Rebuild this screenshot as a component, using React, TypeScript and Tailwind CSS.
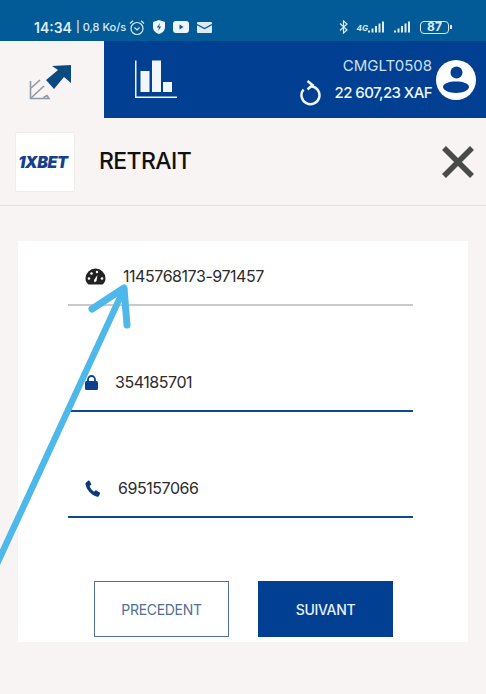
import React from "react";

const AlarmIcon = () => (
  <svg width="16" height="17" viewBox="0 0 16 17" fill="none" stroke="#dcebf5" strokeWidth="1.2">
    <circle cx="8" cy="9.5" r="6" />
    <path d="M5.5 8.5 8 11l2.5-2.5" />
    <path d="M1 4.500 4 1.800M15 4.500 12 1.800" />
  </svg>
);

const ShieldIcon = () => (
  <svg width="12" height="14" viewBox="0 0 12 14">
    <path d="M6 0 12 2v5c0 3.500-2.500 6-6 7-3.500-1-6-3.500-6-7V2z" fill="#eef5fa" />
    <path d="M7 3 3.800 7.500H6L5 11l3.200-4.500H6z" fill="#025a96" />
  </svg>
);

const YoutubeIcon = () => (
  <svg width="16" height="12" viewBox="0 0 16 12">
    <rect width="16" height="12" rx="3" fill="#eef5fa" />
    <path d="M6.500 3.500v5L10.500 6z" fill="#025a96" />
  </svg>
);

const MailIcon = () => (
  <svg width="15" height="11" viewBox="0 0 15 11">
    <rect width="15" height="11" rx="1" fill="#dcebf5" />
    <path d="M0 2.500 7.500 6.500 15 2.500" fill="none" stroke="#025a96" strokeWidth="1.300" />
  </svg>
);

const BluetoothIcon = () => (
  <svg width="9" height="14" viewBox="0 0 9 14" fill="none" stroke="#dcebf5" strokeWidth="1.200">
    <path d="M1 3.500 8 10 4.500 13V1L8 4 1 10.500" />
  </svg>
);

const SignalIcon = () => (
  <svg width="17" height="12" viewBox="0 0 17 12" fill="#dcebf5">
    <rect x="0" y="9.500" width="2" height="2" />
    <rect x="3.500" y="7.500" width="2" height="4" />
    <rect x="7" y="5" width="2" height="6.500" />
    <rect x="10.500" y="2.500" width="2" height="9" />
    <rect x="14" y="0.500" width="2" height="11" />
  </svg>
);

const SwapIcon = () => (
  <svg width="48" height="38" viewBox="0 0 48 38" fill="none">
    <path d="M14 17 5 25" stroke="#8f9aa6" strokeWidth="1.600" />
    <path d="M4.500 18v17.500H23l-2-3-3.500 2" stroke="#8f9aa6" strokeWidth="1.600" />
    <path d="M5 35 18 23" stroke="#8f9aa6" strokeWidth="1.600" />
    <path d="M26 3 45 2V20L38 14 28 26 20 17 32 7z" fill="#0b4a7e" />
  </svg>
);

const ChartIcon = () => (
  <svg width="44" height="40" viewBox="0 0 44 40" fill="#f1f6fa">
    <rect x="0" y="0.500" width="1.500" height="37" />
    <rect x="0" y="36.500" width="42" height="1.500" />
    <rect x="5.500" y="11" width="9" height="21" />
    <rect x="17" y="0.500" width="9" height="31.500" />
    <rect x="28" y="22" width="9" height="10" />
  </svg>
);

const RefreshIcon = () => (
  <svg width="24" height="26" viewBox="0 0 24 26" fill="none" stroke="#f1f6fa" strokeWidth="2.500">
    <path d="M12 6.200A9 9 0 1 1 4.500 9.500" />
    <path d="M8.500 1 13.500 5 8.500 9.500" />
  </svg>
);

const UserBadge = () => (
  <svg width="40" height="40" viewBox="0 0 40 40">
    <circle cx="20" cy="20" r="20" fill="#fff" />
    <circle cx="20.500" cy="12.500" r="6" fill="#003f92" />
    <path d="M20 21.500c-7 0-13 2-13 5.500 0 3 6 6 13 6s13-3 13-6c0-3.500-6-5.500-13-5.500z" fill="#003f92" />
  </svg>
);

const GaugeIcon = () => (
  <svg width="21" height="17" viewBox="0 0 21 17">
    <path d="M3.500 16.500C1.500 15 .5 12.800.5 10.500a10 10 0 0 1 20 0c0 2.300-1 4.500-3 6z" fill="#222" />
    <g fill="#fff">
      <circle cx="4" cy="10.500" r="1.300" />
      <circle cx="6.500" cy="5.500" r="1.300" />
      <circle cx="12" cy="4" r="1.200" />
      <circle cx="17" cy="10.500" r="1.300" />
      <path d="M9.500 14.500 9 12l3.500-5-1 6z" />
    </g>
  </svg>
);

const LockIcon = () => (
  <svg width="13" height="15" viewBox="0 0 13 15">
    <path d="M3 7V4.500a3.500 3.500 0 0 1 7 0V7" fill="none" stroke="#0b3f8f" strokeWidth="1.800" />
    <rect x="0" y="6" width="13" height="9" rx="1.500" fill="#0b3f8f" />
  </svg>
);

const PhoneIcon = () => (
  <svg width="16" height="17" viewBox="0 0 16 17">
    <path
      d="M1 2.500 3.500.5c.5-.3 1 0 1.200.4l1.500 3c.2.500.1.900-.3 1.200L4.600 6c.7 2.300 2.400 4.400 4.500 5.700l1.200-1.100c.4-.3.800-.4 1.200-.1l3.200 1.900c.4.300.5.800.3 1.200L14 16c-.4.600-1 .9-1.800.7C6.500 15.500 1.200 9.500.5 4c-.1-.6.100-1.100.5-1.500z"
      fill="#0b3a75"
    />
  </svg>
);

function Field({ icon, value, gap, line }: { icon: React.ReactNode; value: string; gap: string; line: string }) {
  return (
    <div className={`ml-[50px] w-[345px] h-[40px] border-b-2 ${line} flex items-start`}>
      <div className={`flex items-center ${gap} pl-[17px] text-[16px] leading-[20px] tracking-[-0.45px] text-[#2b2b2b]`}>
        <span className="flex w-[21px] justify-start">{icon}</span>
        <span>{value}</span>
      </div>
    </div>
  );
}

export default function App() {
  return (
    <div className="relative h-[694px] w-[486px] overflow-hidden bg-[#f8f4f3] font-['Inter',sans-serif]">
      {/* Status bar */}
      <div className="flex h-[41px] items-center justify-between bg-[#025a96] pl-[34px] pr-[34px] pt-[13px] text-[#dcebf5]">
        <div className="flex items-center">
          <span className="text-[14px] font-semibold">14:34</span>
          <span className="ml-[4px] text-[11px] font-medium">| 0,8 Ko/s</span>
          <span className="ml-[3px] flex items-center gap-[8px]">
            <AlarmIcon />
            <ShieldIcon />
            <YoutubeIcon />
            <MailIcon />
          </span>
        </div>
        <div className="flex items-center gap-[9px]">
          <BluetoothIcon />
          <span className="flex items-end">
            <span className="text-[8px] font-bold italic leading-[10px]">4G</span>
            <SignalIcon />
          </span>
          <SignalIcon />
          <span className="flex items-center">
            <span className="flex h-[13px] w-[29px] items-center justify-center rounded-[4px] border border-[#dcebf5] text-[12px] font-bold leading-none">
              87
            </span>
            <span className="ml-[1px] h-[4px] w-[2px] bg-[#dcebf5]" />
          </span>
        </div>
      </div>

      {/* Top nav */}
      <div className="flex h-[77px] bg-[#003f92]">
        <div className="flex w-[104px] items-center justify-center bg-[#f8f4f3] pr-[5px] pt-[4px]">
          <SwapIcon />
        </div>
        <div className="ml-[31px] flex items-center">
          <ChartIcon />
        </div>
        <div className="ml-auto flex items-center gap-[4px] pr-[10px]">
          <div className="flex flex-col items-end pt-[3px]">
            <span className="text-[15px] leading-[20px] text-[#cfe0f2]">CMGLT0508</span>
            <div className="mt-[4px] flex items-center gap-[12px]">
              <RefreshIcon />
              <span className="text-[15px] font-medium leading-[20px] tracking-[-0.6px] text-[#f1f6fa]">22 607,23 XAF</span>
            </div>
          </div>
          <UserBadge />
        </div>
      </div>

      {/* Page title */}
      <div className="flex h-[88px] items-center border-b border-[#e2dedd] pl-[15px] pr-[11px]">
        <div className="flex h-[60px] w-[60px] items-center justify-center rounded-[2px] border border-[#f0ecec] bg-white pr-[4px]">
          <span className="text-[16px] font-black italic tracking-[-0.4px] text-[#14408f]">1XBET</span>
        </div>
        <span className="ml-[24px] text-[23px] font-medium tracking-[-0.6px] text-[#111]">RETRAIT</span>
        <svg className="ml-auto" width="34" height="34" viewBox="0 0 34 34" stroke="#4a4a4a" strokeWidth="5.5">
          <path d="M3 3 31 31M31 3 3 31" />
        </svg>
      </div>

      {/* Form card */}
      <div className="ml-[18px] mt-[35px] h-[401px] w-[450px] bg-white pt-[25px]">
        <Field icon={<GaugeIcon />} value="1145768173-971457" gap="gap-[17px]" line="border-[#c9c9c9]" />
        <div className="mt-[66px]">
          <Field icon={<LockIcon />} value="354185701" gap="gap-[9px]" line="border-[#0f4a8c]" />
        </div>
        <div className="mt-[66px]">
          <Field icon={<PhoneIcon />} value="695157066" gap="gap-[12px]" line="border-[#0f4a8c]" />
        </div>
        <div className="ml-[76px] mt-[63px] flex gap-[29px]">
          <div className="flex h-[56px] w-[135px] items-center justify-center border border-[#4f7094] text-[14px] tracking-[-0.3px] text-[#4f7094]">
            PRECEDENT
          </div>
          <div className="flex h-[56px] w-[135px] items-center justify-center bg-[#003f92] text-[14px] font-medium tracking-[-0.3px] text-[#e8f0f8]">
            SUIVANT
          </div>
        </div>
      </div>

      {/* Annotation arrow drawn on top of the shot */}
      <svg className="pointer-events-none absolute left-0 top-0" width="486" height="694" fill="none" stroke="#4fb8ea" strokeLinecap="round">
        <path d="M-4 566 124 289" strokeWidth="6.500" />
        <path d="M92 309 124 288 127 325" strokeWidth="7" strokeLinejoin="round" />
      </svg>
    </div>
  );
}
